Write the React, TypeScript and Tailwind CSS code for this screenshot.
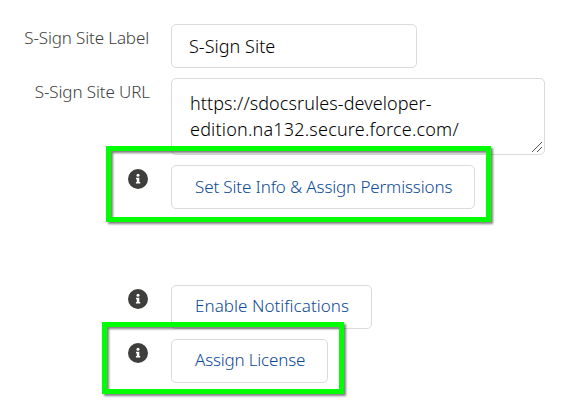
import type { ReactNode } from "react";

function InfoIcon() {
  return (
    <svg width="20" height="20" viewBox="0 0 20 20" className="mt-[4px] block" aria-label="Info">
      <circle cx="10" cy="10" r="10" fill="#3e3e3c" />
      <circle cx="10" cy="6.3" r="1.5" fill="#fff" />
      <path d="M8 8.7h3.3v4.4h.9v1.5H7.9v-1.5h.9v-2.9H8z" fill="#fff" />
    </svg>
  );
}

function Row({ label, children, className = "" }: { label: ReactNode; children: ReactNode; className?: string }) {
  return (
    <div className={`flex items-start ${className}`}>
      <div className="flex w-[171px] shrink-0 justify-end whitespace-nowrap text-[17px] leading-[28px] text-[#3e3e3c]">{label}</div>
      {children}
    </div>
  );
}

const button = "h-[44px] shrink-0 whitespace-nowrap rounded-[5px] border border-[#dddbda] bg-white pl-[23px] text-left text-[17px] text-[#0b4a96]";
const highlight = "pointer-events-none absolute border-[5px] border-[#00ff00] [filter:drop-shadow(2px_2px_1px_rgba(0,0,0,0.5))]";

export default function App() {
  return (
    <main className="relative h-[407px] w-[573px] overflow-hidden bg-white pt-[24px] font-[350] [font-family:'Noto_Sans',sans-serif]">
      <Row label={<span className="mr-[22px] tracking-[-0.13px]">S-Sign Site Label</span>}>
        <div className="h-[44px] w-[246px] rounded-[5px] border border-[#dddbda] pl-[17px] text-[18px] leading-[43px] tracking-[0.03px] text-black">S-Sign Site</div>
      </Row>
      <Row className="mt-[10px]" label={<span className="mr-[21px] tracking-[-0.1px]">S-Sign Site URL</span>}>
        <div className="relative h-[77px] w-[374px] rounded-[5px] border border-[#dddbda] pl-[18px] pt-[11px] text-[18px] leading-[26px] text-black">
          <span className="block tracking-[0.08px]">https://sdocsrules-developer-</span>
          <span className="block tracking-[0.2px]">edition.na132.secure.force.com/</span>
          <svg width="10" height="10" viewBox="0 0 10 10" className="absolute bottom-[2px] right-[2px]" shapeRendering="crispEdges">
            <path d="M0 10L10 0M5 10L10 5" stroke="#555" fill="none" />
          </svg>
        </div>
      </Row>
      <Row className="mt-[10px]" label={<span className="mr-[23px]"><InfoIcon /></span>}>
        <button className={`${button} w-[304px] leading-[42px] tracking-[-0.13px]`}>Set Site Info &amp; Assign Permissions</button>
      </Row>
      <Row className="mt-[76px]" label={<span className="mr-[23px]"><InfoIcon /></span>}>
        <button className={`${button} w-[201px] pb-[2px] leading-[40px] tracking-[0.05px]`}>Enable Notifications</button>
      </Row>
      <Row className="mt-[10px]" label={<span className="mr-[23px]"><InfoIcon /></span>}>
        <button className={`${button} w-[157px] pb-[2px] leading-[40px] tracking-[-0.18px]`}>Assign License</button>
      </Row>
      <div className={`${highlight} left-[106px] top-[146px] h-[76px] w-[385px]`} />
      <div className={`${highlight} left-[102px] top-[322px] h-[72px] w-[242px]`} />
    </main>
  );
}
